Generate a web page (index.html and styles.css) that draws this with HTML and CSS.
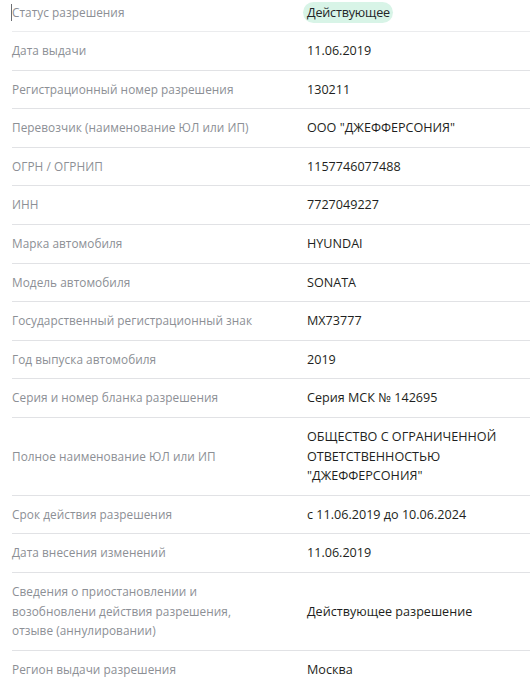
FILE: index.html
```html
<!DOCTYPE html>
<html lang="ru">
<head>
<meta charset="utf-8">
<link rel="stylesheet" href="styles.css">
</head>
<body>
<dl class="permit">
  <div class="row row-first">
    <dt class="label"><span class="caret"></span>Статус разрешения</dt>
    <dd class="value"><span class="badge">Действующее</span></dd>
  </div>
  <div class="row">
    <dt class="label">Дата выдачи</dt>
    <dd class="value">11.06.2019</dd>
  </div>
  <div class="row">
    <dt class="label">Регистрационный номер разрешения</dt>
    <dd class="value">130211</dd>
  </div>
  <div class="row">
    <dt class="label">Перевозчик (наименование ЮЛ или ИП)</dt>
    <dd class="value">ООО "ДЖЕФФЕРСОНИЯ"</dd>
  </div>
  <div class="row">
    <dt class="label">ОГРН / ОГРНИП</dt>
    <dd class="value">1157746077488</dd>
  </div>
  <div class="row">
    <dt class="label">ИНН</dt>
    <dd class="value">7727049227</dd>
  </div>
  <div class="row">
    <dt class="label">Марка автомобиля</dt>
    <dd class="value">HYUNDAI</dd>
  </div>
  <div class="row">
    <dt class="label">Модель автомобиля</dt>
    <dd class="value">SONATA</dd>
  </div>
  <div class="row">
    <dt class="label">Государственный регистрационный знак</dt>
    <dd class="value">МХ73777</dd>
  </div>
  <div class="row">
    <dt class="label">Год выпуска автомобиля</dt>
    <dd class="value">2019</dd>
  </div>
  <div class="row">
    <dt class="label">Серия и номер бланка разрешения</dt>
    <dd class="value">Серия МСК № 142695</dd>
  </div>
  <div class="row">
    <dt class="label">Полное наименование ЮЛ или ИП</dt>
    <dd class="value">ОБЩЕСТВО С ОГРАНИЧЕННОЙ<br>ОТВЕТСТВЕННОСТЬЮ<br>"ДЖЕФФЕРСОНИЯ"</dd>
  </div>
  <div class="row">
    <dt class="label">Срок действия разрешения</dt>
    <dd class="value">с 11.06.2019 до 10.06.2024</dd>
  </div>
  <div class="row">
    <dt class="label">Дата внесения изменений</dt>
    <dd class="value">11.06.2019</dd>
  </div>
  <div class="row">
    <dt class="label">Сведения о приостановлении и<br>возобновлени действия разрешения,<br>отзыве (аннулировании)</dt>
    <dd class="value">Действующее разрешение</dd>
  </div>
  <div class="row row-last">
    <dt class="label">Регион выдачи разрешения</dt>
    <dd class="value">Москва</dd>
  </div>
</dl>
</body>
</html>
```

FILE: styles.css
```css
html, body {
  margin: 0;
  padding: 0;
  background: #ffffff;
}

.permit {
  margin: 0;
  padding: 0 0 0 12px;
  font-family: "Open Sans", "Noto Sans", sans-serif;
}

.row {
  display: grid;
  grid-template-columns: 295px 1fr;
  align-items: center;
  padding: 9px 0;
  border-bottom: 1px solid #e1e2e5;
  line-height: 19.6px;
}

.row-first {
  padding: 2px 0 8px;
  border-bottom-color: #ebecee;
}

.row-last {
  border-bottom: none;
}

.label {
  margin: 0;
  font-size: 11.8px;
  letter-spacing: 0.05px;
  color: #8c8f95;
}

.caret {
  display: inline-block;
  width: 1px;
  height: 17px;
  background: #6d6f73;
  vertical-align: -4px;
  margin-left: -1px;
}

.value {
  margin: 0;
  font-size: 12.6px;
  color: #1e1f21;
}

.badge {
  display: inline-block;
  background: #d8f4e7;
  border-radius: 11px;
  padding: 0 3px 0 4px;
  margin-left: -4px;
  line-height: 21px;
  font-weight: 500;
  letter-spacing: -0.2px;
  color: #232427;
}
```
